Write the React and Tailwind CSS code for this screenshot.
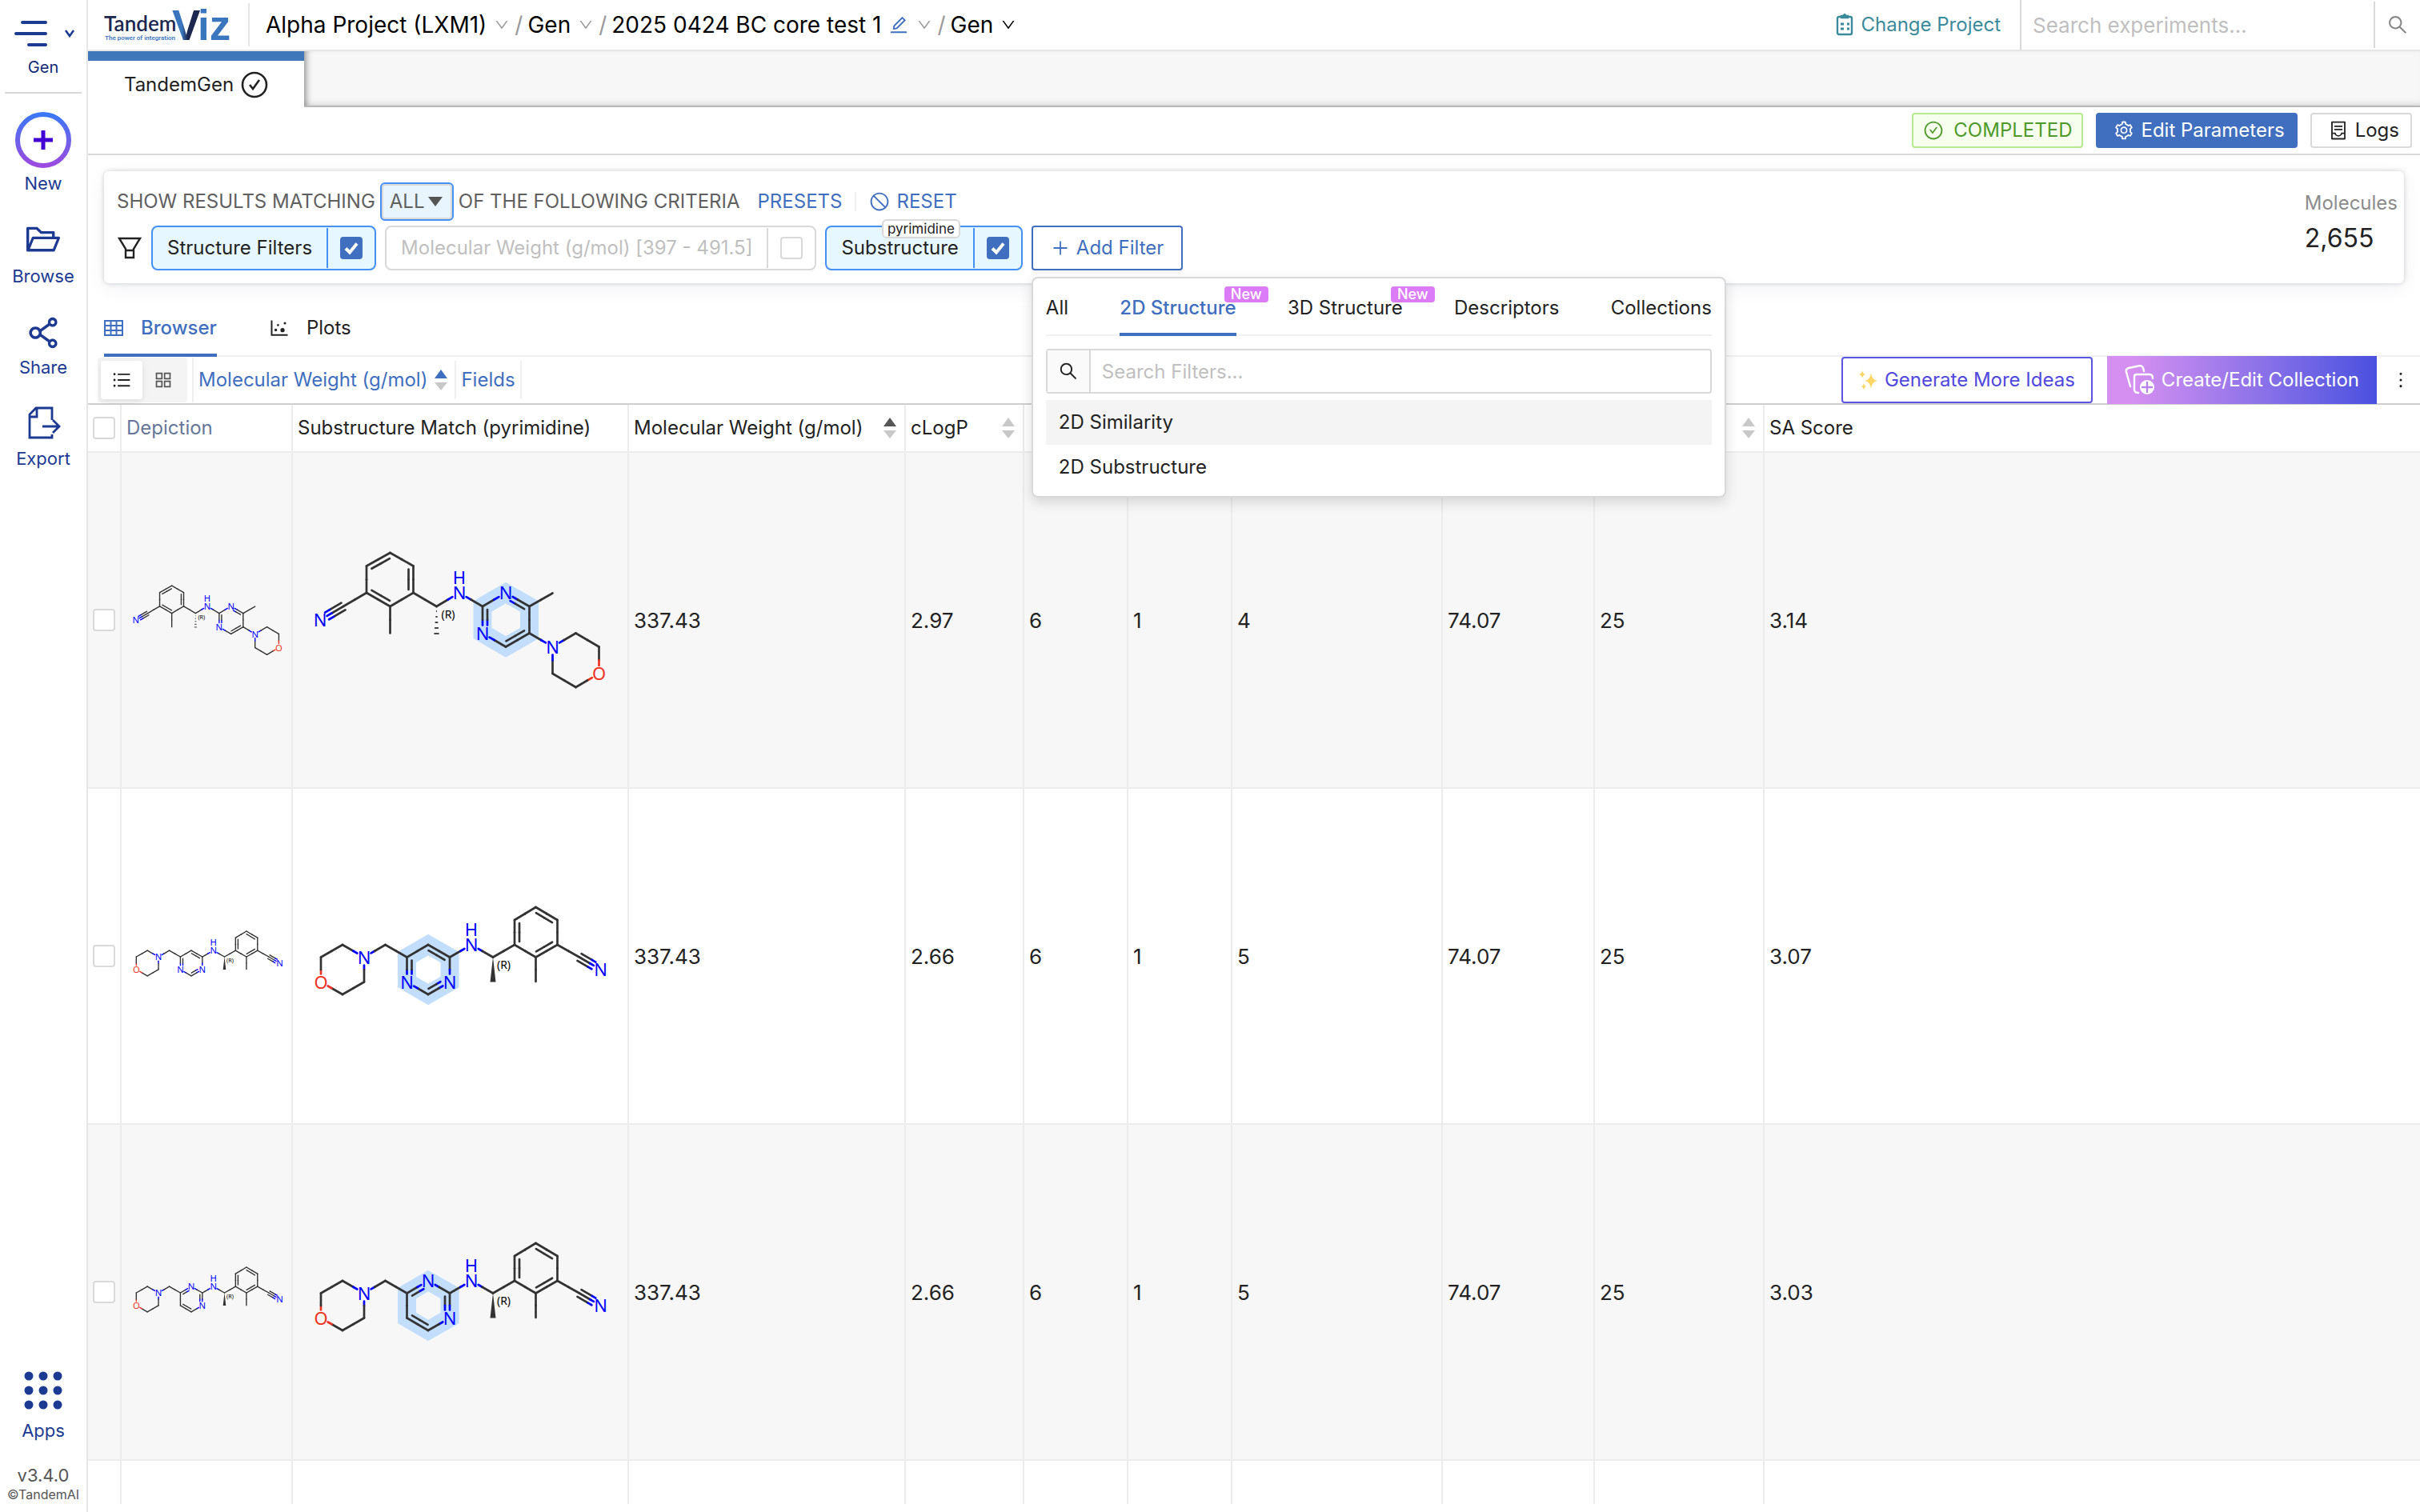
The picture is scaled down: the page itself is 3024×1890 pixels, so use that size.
import React from 'react';
import {
  AiOutlineAppstore,
  AiOutlineCheckCircle,
  AiOutlineContainer,
  AiOutlineDotChart,
  AiOutlineDown,
  AiOutlineEdit,
  AiOutlineFolderOpen,
  AiOutlineMore,
  AiOutlinePlus,
  AiOutlineSearch,
  AiOutlineSetting,
  AiOutlineShareAlt,
  AiOutlineStop,
  AiOutlineUnorderedList,
} from 'react-icons/ai';

const COLORS = { C: '#333333', N: '#0000ff', O: '#ee3322' };

// Atoms are [element, x, y], bonds are [from, to, order, side]
const morpholinyl = {
  atoms: [
    ['C', -87.5, -84], ['C', -58.5, -67.5], ['C', -58.5, -34], ['C', -87.5, -17], ['C', -117, -34], ['C', -117, -67.5],
    ['C', -87.5, 16.5], ['C', -146, -17], ['N', -175, 0],
    ['C', -29.5, -17], ['N', -1, -34], ['C', 28, -17],
    ['N', 57, -34], ['C', 86.5, -17], ['C', 86.5, 16.5], ['C', 57, 33.5], ['N', 28, 16.5],
    ['C', 115.5, -33.5], ['N', 115.5, 33.5],
    ['C', 144.5, 16.5], ['C', 173.5, 33.5], ['O', 173.5, 67], ['C', 144.5, 84], ['C', 115.5, 67],
  ],
  bonds: [
    [0, 1, 1], [1, 2, 2, 1], [2, 3, 1], [3, 4, 2, 1], [4, 5, 1], [5, 0, 2, 1],
    [3, 6, 1], [4, 7, 1], [7, 8, 3], [2, 9, 1], [9, 10, 1], [10, 11, 1],
    [11, 12, 1], [12, 13, 2, 1], [13, 14, 1], [14, 15, 2, 1], [15, 16, 1], [16, 11, 2, 1],
    [13, 17, 1], [14, 18, 1], [18, 19, 1], [19, 20, 1], [20, 21, 1], [21, 22, 1], [22, 23, 1], [23, 18, 1],
  ],
  ring: [11, 12, 13, 14, 15, 16],
  nh: [-1, -53],
  chiral: [-15, -7],
  hashed: [-29.5, -17],
};

const tail = [
  ['O', -174, 32.5], ['C', -174, 1.5], ['C', -147, -14], ['N', -120, 1.5], ['C', -120, 32.5], ['C', -147, 48], ['C', -93.5, -14],
];
const benzonitrile = [
  ['N', 14, -14], ['C', 41, 1.5],
  ['C', 68, -14], ['C', 68, -45], ['C', 94.5, -61], ['C', 121.5, -45], ['C', 121.5, -14], ['C', 94.5, 1.5],
  ['C', 94.5, 32], ['C', 149, 1.5], ['N', 175.5, 17],
];
const sharedBonds = [
  [0, 1, 1], [1, 2, 1], [2, 3, 1], [3, 4, 1], [4, 5, 1], [5, 0, 1], [3, 6, 1], [6, 7, 1],
  [9, 13, 1], [13, 14, 1], [14, 15, 1], [15, 16, 2, 1], [16, 17, 1], [17, 18, 2, 1], [18, 19, 1], [19, 20, 2, 1], [20, 15, 1],
  [20, 21, 1], [19, 22, 1], [22, 23, 3],
];

const pyrimidin4yl = {
  atoms: [
    ...tail,
    ['C', -66.5, 1.5], ['C', -40, -14], ['C', -13, 1.5], ['N', -13, 32.5], ['C', -40, 48], ['N', -66.5, 32.5],
    ...benzonitrile,
  ],
  bonds: [...sharedBonds, [7, 8, 1], [8, 9, 2, 1], [9, 10, 1], [10, 11, 2, 1], [11, 12, 1], [12, 7, 2, 1]],
  ring: [7, 8, 9, 10, 11, 12],
  nh: [14, -33],
  chiral: [54.5, 11],
  wedge: [41, 1.5],
};

const pyrimidin2yl = {
  atoms: [
    ...tail,
    ['C', -66.5, 1.5], ['N', -40, -14], ['C', -13, 1.5], ['N', -13, 32.5], ['C', -40, 48], ['C', -66.5, 32.5],
    ...benzonitrile,
  ],
  bonds: [...sharedBonds, [7, 8, 2, 1], [8, 9, 1], [9, 10, 2, 1], [10, 11, 1], [11, 12, 2, 1], [12, 7, 1]],
  ring: [7, 8, 9, 10, 11, 12],
  nh: [14, -33],
  chiral: [54.5, 11],
  wedge: [41, 1.5],
};

const rows = [
  { id: 1, molecule: morpholinyl, values: ['337.43', '2.97', '6', '1', '4', '74.07', '25', '3.14'] },
  { id: 2, molecule: pyrimidin4yl, values: ['337.43', '2.66', '6', '1', '5', '74.07', '25', '3.07'] },
  { id: 3, molecule: pyrimidin2yl, values: ['337.43', '2.66', '6', '1', '5', '74.07', '25', '3.03'] },
];

const Bond = ({ a, b, order, side }) => {
  const dx = b[1] - a[1];
  const dy = b[2] - a[2];
  const len = Math.hypot(dx, dy);
  const ux = dx / len;
  const uy = dy / len;
  const nx = -uy * (side || 1);
  const ny = ux * (side || 1);

  const segment = (offset, trim, key) => {
    const padA = a[0] === 'C' ? trim : 10;
    const padB = b[0] === 'C' ? trim : 10;
    const x1 = a[1] + ux * padA + nx * offset;
    const y1 = a[2] + uy * padA + ny * offset;
    const x2 = b[1] - ux * padB + nx * offset;
    const y2 = b[2] - uy * padB + ny * offset;
    const mx = (a[1] + b[1]) / 2 + nx * offset;
    const my = (a[2] + b[2]) / 2 + ny * offset;
    return (
      <g key={key}>
        <line x1={x1} y1={y1} x2={mx} y2={my} stroke={COLORS[a[0]]} />
        <line x1={mx} y1={my} x2={x2} y2={y2} stroke={COLORS[b[0]]} />
      </g>
    );
  };

  if (order === 3) return <>{[segment(0, 0, 'm'), segment(5, 0, 'l'), segment(-5, 0, 'r')]}</>;
  if (order === 2) return <>{[segment(0, 0, 'm'), segment(6, 4, 'i')]}</>;
  return segment(0, 0, 'm');
};

const Molecule = ({ data, highlight }) => {
  const { atoms, bonds, ring, nh, chiral, hashed, wedge } = data;
  return (
    <svg viewBox="-200 -100 400 200" className="block w-full">
      {highlight && (
        <polygon
          points={ring.map((i) => `${atoms[i][1]},${atoms[i][2]}`).join(' ')}
          fill="none"
          stroke="#c2defc"
          strokeWidth="23"
          strokeLinejoin="miter"
        />
      )}
      <g strokeWidth="2.7" strokeLinecap="round">
        {bonds.map(([from, to, order, side]) => (
          <Bond key={`${from}-${to}`} a={atoms[from]} b={atoms[to]} order={order} side={side} />
        ))}
      </g>
      {hashed && (
        <g stroke="#333333" strokeWidth="1.8">
          {[6, 13, 20, 27, 34].map((d) => (
            <line key={d} x1={hashed[0] - d / 11} x2={hashed[0] + d / 11} y1={hashed[1] + d} y2={hashed[1] + d} />
          ))}
        </g>
      )}
      {wedge && <polygon points={`${wedge[0]},${wedge[1]} ${wedge[0] - 3.5},${wedge[1] + 31} ${wedge[0] + 3.5},${wedge[1] + 31}`} fill="#333333" />}
      <g fontFamily="'Noto Sans', sans-serif" fontSize="22" textAnchor="middle">
        {atoms.map(([el, x, y], i) =>
          el === 'C' ? null : (
            <text key={i} x={x} y={y + 8} fill={COLORS[el]}>{el}</text>
          )
        )}
        <text x={nh[0]} y={nh[1] + 8} fill={COLORS.N}>H</text>
        <text x={chiral[0]} y={chiral[1] + 5} fontSize="14" fill="#000000">(R)</text>
      </g>
    </svg>
  );
};

const Sorter = ({ up = '#c8c8c8', down = '#c8c8c8' }) => (
  <svg width="18" height="28" viewBox="0 0 18 28" className="shrink-0">
    <path d="M9 1 L17 12 H1 Z" fill={up} />
    <path d="M1 17 H17 L9 27 Z" fill={down} />
  </svg>
);

const Checkbox = ({ checked, label }) => (
  <span className="grid h-7 w-7 shrink-0">
    <input
      type="checkbox"
      aria-label={label}
      defaultChecked={checked}
      className="peer h-7 w-7 appearance-none rounded border-2 border-[#d9d9d9] bg-white [grid-area:1/1] checked:border-[#3f6fbe] checked:bg-[#3f6fbe]"
    />
    <svg viewBox="0 0 28 28" className="pointer-events-none hidden h-7 w-7 [grid-area:1/1] peer-checked:block">
      <path d="M7 14.5 L12 19.5 L21 8.5" fill="none" stroke="#ffffff" strokeWidth="4" />
    </svg>
  </span>
);

const FilterChip = ({ label, checked, badge }) => (
  <div className={`relative flex h-14 items-center rounded-lg border-2 ${checked ? 'border-[#4590f3] bg-[#e6f7ff] text-[#222222]' : 'border-[#d9d9d9] bg-white text-[#bfbfbf]'}`}>
    <button className="px-[18px]">{label}</button>
    <div className={`flex h-[50px] items-center border-l-2 px-[15px] ${checked ? 'border-[#4590f3]' : 'border-[#d9d9d9]'}`}>
      <Checkbox checked={checked} label={label} />
    </div>
    {badge && (
      <span className="absolute -top-[10px] right-[76px] rounded-md border-2 border-[#d9d9d9] bg-white px-[5px] text-[17px] leading-5">{badge}</span>
    )}
  </div>
);

const SidebarItem = ({ icon, label }) => (
  <button className="flex flex-col items-center text-[22px] leading-7 text-[#1c3a92]">
    {icon}
    {label}
  </button>
);

const Sidebar = () => (
  <nav className="flex w-[110px] shrink-0 flex-col items-center border-r-2 border-[#e6e6e6] bg-white">
    <button className="mt-[22px] flex flex-col items-center text-[20px] text-[#0f2878]">
      <span className="flex items-center gap-5 pl-1">
        <svg width="42" height="40" viewBox="0 0 42 40" stroke="#1c3a92" strokeWidth="4" strokeLinecap="round">
          <path d="M10 6 H39 M2 20 H39 M18 34 H39" />
        </svg>
        <svg width="14" height="12" viewBox="0 0 14 12" fill="none" stroke="#1c3a92" strokeWidth="2.5">
          <path d="M2 2 L7 9 L12 2" />
        </svg>
      </span>
      <span className="mt-2 leading-7">Gen</span>
    </button>
    <div className="mt-[17px] h-0.5 w-24 bg-[#d9d9d9]" />
    <div className="mt-[22px] flex flex-col items-center gap-8">
      <SidebarItem
        label="New"
        icon={
          <svg width="72" height="72" viewBox="0 0 72 72" className="mb-1">
            <defs>
              <linearGradient id="newRing" x1="0" y1="0" x2="0" y2="1">
                <stop offset="0" stopColor="#3b78f6" />
                <stop offset="1" stopColor="#9b4bdf" />
              </linearGradient>
            </defs>
            <circle cx="36" cy="36" r="32" fill="none" stroke="url(#newRing)" strokeWidth="6" />
            <path d="M24 36 H48 M36 24 V48" stroke="#4300d2" strokeWidth="5" />
          </svg>
        }
      />
      <SidebarItem label="Browse" icon={<AiOutlineFolderOpen size={48} className="mb-2" />} />
      <SidebarItem label="Share" icon={<AiOutlineShareAlt size={50} className="mb-1" />} />
      <SidebarItem
        label="Export"
        icon={
          <svg width="46" height="46" viewBox="0 0 46 46" fill="none" stroke="#1c3a92" strokeWidth="2.8" className="mb-2">
            <path d="M34 20 V5 H14 L6 13 V42 H34 V38 M15 5 V16 H6" />
            <path d="M22 28 H43 M35 20 L43 28 L35 36" />
          </svg>
        }
      />
    </div>
    <div className="mt-auto mb-3 flex flex-col items-center">
      <SidebarItem
        label="Apps"
        icon={
          <svg width="48" height="48" viewBox="0 0 48 48" fill="#1c3a92" className="mb-3">
            {[6, 24, 42].map((y) => [6, 24, 42].map((x) => <circle key={`${x}-${y}`} cx={x} cy={y} r="5.5" />))}
          </svg>
        }
      />
      <span className="mt-7 text-[22px] leading-7 text-[#555555]">v3.4.0</span>
      <span className="text-[16px] leading-5 text-[#555555]">©TandemAI</span>
    </div>
  </nav>
);

const Logo = () => (
  <svg width="164" height="62" viewBox="0 0 164 62" className="shrink-0">
    <defs>
      <linearGradient id="ribbon" x1="0" y1="0" x2="1" y2="0">
        <stop offset="0" stopColor="#3a76bd" />
        <stop offset="0.35" stopColor="#3a76bd" />
        <stop offset="0.55" stopColor="#1c2850" />
        <stop offset="1" stopColor="#1c2850" />
      </linearGradient>
    </defs>
    <text x="0" y="39" fontFamily="Lato, sans-serif" fontSize="26" fontWeight="600" fill="#1c2850">Tandem</text>
    <text x="1" y="50" fontFamily="Roboto, sans-serif" fontSize="8" fontWeight="600" fill="#3a76bd">The power of integration</text>
    <text x="85" y="50" fontFamily="'Liberation Sans', sans-serif" fontSize="53" fontWeight="700" fill="url(#ribbon)">V</text>
    <text x="117" y="50" fontFamily="'Liberation Sans', sans-serif" fontSize="53" fontWeight="700" fill="#3a76bd">iz</text>
  </svg>
);

const Crumb = ({ label, dark, edit }) => (
  <button className="flex items-center gap-[9px] text-black">
    {label}
    {edit && <AiOutlineEdit size={26} className="text-[#3f6fbe]" />}
    <AiOutlineDown size={20} className={dark ? 'text-black' : 'text-[#999999]'} />
  </button>
);

const Slash = () => <span className="text-[#999999]">/</span>;

const Header = () => (
  <header className="flex h-16 items-center border-b-2 border-[#e6e6e6] bg-white pl-5">
    <Logo />
    <div className="ml-4 h-[54px] w-0.5 bg-[#e6e6e6]" />
    <div className="ml-5 flex items-center gap-[6px] text-[28px]">
      <Crumb label="Alpha Project (LXM1)" />
      <Slash />
      <Crumb label="Gen" />
      <Slash />
      <Crumb label="2025 0424 BC core test 1" edit />
      <Slash />
      <Crumb label="Gen" dark />
    </div>
    <a href="#projects" className="ml-auto flex items-center gap-[9px] pr-6 text-[#3a8a9c]">
      <svg width="22" height="28" viewBox="0 0 22 28" fill="none" stroke="#3a8a9c" strokeWidth="2.4">
        <rect x="2" y="4" width="18" height="22" rx="2" />
        <path d="M7 5 V3 H9 L11 1 L13 3 H15 V5 Z" fill="#3a8a9c" />
        <path d="M6 13 H10 M6 19 H10 M14 13 H17 M14 19 H17" strokeWidth="3" />
      </svg>
      Change Project
    </a>
    <div className="flex h-full w-[500px] items-center border-l-2 border-[#d9d9d9]">
      <input
        type="search"
        aria-label="Search experiments"
        placeholder="Search experiments..."
        className="h-full min-w-0 flex-1 px-[14px] text-[26px] outline-none placeholder:text-[#bfbfbf]"
      />
      <button aria-label="Search" className="flex h-[58px] w-[58px] items-center justify-center border-l-2 border-[#d9d9d9] text-[#888888]">
        <AiOutlineSearch size={28} />
      </button>
    </div>
  </header>
);

const filterTabs = [
  { label: 'All' },
  { label: '2D Structure', isNew: true, active: true },
  { label: '3D Structure', isNew: true },
  { label: 'Descriptors' },
  { label: 'Collections' },
];

const FilterMenu = () => (
  <div className="absolute top-full left-0 z-10 mt-2 w-[868px] rounded-lg border-2 border-[#d9d9d9] bg-white px-4 pb-2 shadow-[0_6px_16px_rgba(0,0,0,0.14)]">
    <div className="flex h-[72px] justify-between border-b-2 border-[#f0f0f0]">
      {filterTabs.map((tab) => (
        <button key={tab.label} className={`relative h-[72px] border-b-4 pt-[6px] ${tab.active ? 'border-[#3f6fbe] font-medium text-[#3f6fbe]' : 'border-transparent'}`}>
          {tab.label}
          {tab.isNew && (
            <span className="absolute top-[10px] -right-10 rounded bg-[#dc7bf8] px-2 text-[18px] leading-5 font-medium text-white">New</span>
          )}
        </button>
      ))}
    </div>
    <label className="mt-4 flex h-14 items-center rounded border-2 border-[#d9d9d9]">
      <span className="flex h-full w-[54px] items-center justify-center border-r-2 border-[#d9d9d9] bg-[#fafafa]">
        <AiOutlineSearch size={26} />
      </span>
      <input aria-label="Search Filters" placeholder="Search Filters..." className="h-full min-w-0 flex-1 px-[14px] outline-none placeholder:text-[#bfbfbf]" />
    </label>
    <ul className="mt-2">
      <li className="flex h-14 items-center bg-[#f4f4f4] px-4">2D Similarity</li>
      <li className="flex h-14 items-center px-4">2D Substructure</li>
    </ul>
  </div>
);

const FilterCard = () => (
  <section className="m-5 flex h-[140px] rounded-md bg-white pl-4 shadow-[0_0_6px_rgba(0,0,0,0.18),0_6px_24px_rgba(20,40,80,0.06)]">
    <div className="flex flex-col pt-[14px]">
      <div className="flex h-12 items-center text-[#606060]">
        <label htmlFor="match-mode">SHOW RESULTS MATCHING</label>
        <span className="relative mx-[6px] flex items-center">
          <select id="match-mode" className="h-12 w-[92px] appearance-none rounded-md border-2 border-[#4590f3] bg-[#e8f5fe] pl-[10px] inset-ring-2 inset-ring-[#d9d9d9] outline-none">
            <option>ALL</option>
          </select>
          <svg width="18" height="12" viewBox="0 0 18 12" className="pointer-events-none absolute right-[14px]">
            <path d="M0 0 H18 L9 12 Z" fill="#555555" />
          </svg>
        </span>
        <span>OF THE FOLLOWING CRITERIA</span>
        <button className="ml-[22px] text-[#3f6fbe]">PRESETS</button>
        <span className="mx-4 h-6 w-0.5 bg-[#f0f0f0]" />
        <button className="flex items-center gap-2 text-[#3f6fbe]">
          <AiOutlineStop size={26} />
          RESET
        </button>
      </div>
      <div className="mt-[6px] flex items-center gap-[11px] text-[#222222]">
        <svg width="32" height="28" viewBox="0 0 32 28" fill="none" stroke="#222222" strokeWidth="2.4">
          <path d="M3 2 H29 L21 15 V26 H11 V15 Z M11 17 H21" />
        </svg>
        <FilterChip label="Structure Filters" checked />
        <FilterChip label="Molecular Weight (g/mol) [397 - 491.5]" />
        <FilterChip label="Substructure" checked badge="pyrimidine" />
        <div className="relative">
          <button className="flex h-14 items-center gap-2 rounded border-2 border-[#3f6fbe] bg-white px-[22px] text-[#3f6fbe] shadow-[0_4px_0_rgba(0,0,0,0.03)]">
            <AiOutlinePlus size={24} />
            Add Filter
          </button>
          <FilterMenu />
        </div>
      </div>
    </div>
    <div className="ml-auto pt-[22px] pr-2">
      <div className="leading-9 text-[#8c8c8c]">Molecules</div>
      <div className="mt-[6px] text-[32px] leading-10 text-[#222222]">2,655</div>
    </div>
  </section>
);

const App = () => {
  return (
    <div className="flex h-screen overflow-hidden bg-white font-['Inter',sans-serif] text-[24px] text-[#222222]">
      <Sidebar />
      <main className="flex min-w-0 flex-1 flex-col">
        <Header />

        <div className="flex h-[70px]">
          <button className="flex w-[270px] items-center justify-center gap-[9px] border-t-[12px] border-[#3f78ba] bg-white pt-0.5">
            TandemGen
            <svg width="34" height="34" viewBox="0 0 34 34" fill="none" stroke="#222222" strokeWidth="2.6">
              <circle cx="17" cy="17" r="15" />
              <path d="M11 17 L15 22 L23 11" />
            </svg>
          </button>
          <div className="flex-1 border-b-2 border-[#b8b8b8] bg-[#f7f7f7] shadow-[inset_8px_0_8px_-6px_rgba(0,0,0,0.45),inset_0_-8px_8px_-6px_rgba(0,0,0,0.12)]" />
        </div>

        <div className="flex h-[60px] items-center justify-end gap-4 border-b-2 border-[#d9d9d9] pr-[10px]">
          <span className="flex h-11 items-center gap-3 rounded border-2 border-[#b7eb8f] bg-[#f6ffed] px-3 text-[#4f9a2b]">
            <AiOutlineCheckCircle size={26} />
            COMPLETED
          </span>
          <button className="flex h-11 items-center gap-2 rounded bg-[#3f6fbe] pr-4 pl-[22px] text-white">
            <AiOutlineSetting size={26} />
            Edit Parameters
          </button>
          <button className="flex h-11 items-center gap-2 rounded border-2 border-[#d9d9d9] bg-white pr-[14px] pl-5">
            <AiOutlineContainer size={26} />
            Logs
          </button>
        </div>

        <FilterCard />

        <div className="ml-5 flex h-[72px] gap-[64px] border-b-2 border-[#f0f0f0]">
          <button className="flex h-[72px] items-center gap-[22px] border-b-4 border-[#3f6fbe] pt-1 font-medium text-[#3f6fbe]">
            <svg width="24" height="20" viewBox="0 0 24 20" fill="none" stroke="#3f6fbe" strokeWidth="2">
              <path d="M1 1 H23 V19 H1 Z M1 7 H23 M1 13 H23 M8.500 1 V19 M15.500 1 V19" />
            </svg>
            Browser
          </button>
          <button className="flex h-[72px] items-center gap-5 border-b-4 border-transparent pt-1">
            <AiOutlineDotChart size={28} />
            Plots
          </button>
        </div>

        <div className="flex h-[60px] items-center border-b-2 border-[#cfcfcf] pl-3">
          <div className="flex h-14 items-center rounded bg-[#f4f4f4] px-1">
            <button aria-label="List view" className="flex h-12 w-[52px] items-center justify-center rounded bg-white shadow-[0_2px_8px_rgba(0,0,0,0.1)]">
              <AiOutlineUnorderedList size={26} />
            </button>
            <button aria-label="Grid view" className="flex h-12 w-[52px] items-center justify-center text-[#555555]">
              <AiOutlineAppstore size={26} />
            </button>
          </div>
          <div className="ml-[6px] flex h-14 items-center gap-2 border-l-2 border-[#f0f0f0] pl-[6px] text-[#3f6fbe]">
            <button>Molecular Weight (g/mol)</button>
            <button aria-label="Sort direction"><Sorter up="#3f6fbe" /></button>
          </div>
          <button className="ml-2 h-12 border-x-2 border-[#f0f0f0] px-[6px] text-[#3f6fbe]">Fields</button>
          <button className="ml-auto flex h-[58px] items-center gap-2 rounded border-2 border-[#5b55e0] px-5 text-[#5148dc]">
            <svg width="24" height="26" viewBox="0 0 24 26" fill="#fbd667">
              <path d="M15 4 Q16 13 23 14 Q16 15 15 24 Q14 15 7 14 Q14 13 15 4 Z" />
              <path d="M4 1 Q4.500 5 8 6 Q4.500 7 4 11 Q3.500 7 0 6 Q3.500 5 4 1 Z" />
              <path d="M6 17 Q6.500 20 9 21 Q6.500 22 6 25 Q5.500 22 3 21 Q5.500 20 6 17 Z" />
            </svg>
            Generate More Ideas
          </button>
          <button className="ml-[18px] flex h-[60px] items-center gap-2 bg-linear-to-r from-[#d48ff0] from-10% to-[#4a50df] px-[22px] text-white">
            <svg width="38" height="38" viewBox="0 0 38 38" fill="none" stroke="#ffffff" strokeWidth="2.4" strokeLinecap="round">
              <path d="M7 27 L2 9 Q1 5 5 4 L19 1 Q23 1 24 8" />
              <path d="M17 35 Q12 35 12 31 V15 Q12 12 15 12 H31 Q35 12 35 17" />
              <circle cx="28" cy="28" r="9" fill="#ffffff" stroke="none" />
              <path d="M22 28 H34 M28 22 V34" stroke="#b983ec" />
            </svg>
            Create/Edit Collection
          </button>
          <button aria-label="More" className="flex w-[54px] justify-center pl-[6px]"><AiOutlineMore size={28} /></button>
        </div>

        <div className="mb-[10px] min-h-0 flex-1 overflow-hidden">
          <table className="w-full table-fixed border-separate border-spacing-0 text-left">
            <colgroup>
              <col className="w-[42px]" />
              <col className="w-[214px]" />
              <col className="w-[420px]" />
              <col className="w-[346px]" />
              <col className="w-[148px]" />
              <col className="w-[130px]" />
              <col className="w-[130px]" />
              <col className="w-[263px]" />
              <col className="w-[190px]" />
              <col className="w-[212px]" />
              <col />
            </colgroup>
            <thead>
              <tr className="h-[60px] [&>th]:border-r-2 [&>th]:border-b-2 [&>th]:border-[#ececec] [&>th]:p-0 [&>th]:font-normal [&>th:last-child]:border-r-0">
                <th><div className="flex justify-center"><Checkbox label="Select all" /></div></th>
                <th><div className="pl-[6px] text-[#667799]">Depiction</div></th>
                <th><div className="pl-[6px]">Substructure Match (pyrimidine)</div></th>
                <th><div className="flex items-center justify-between pr-[9px] pl-[6px]">Molecular Weight (g/mol)<Sorter up="#555555" /></div></th>
                <th><div className="flex items-center justify-between pr-[9px] pl-[6px]">cLogP<Sorter /></div></th>
                <th />
                <th />
                <th />
                <th />
                <th><div className="flex justify-end pr-[9px]"><Sorter /></div></th>
                <th><div className="pl-[6px]">SA Score</div></th>
              </tr>
            </thead>
            <tbody className="text-[26px]">
              {rows.map((row) => (
                <tr key={row.id} className="h-[420px] odd:bg-[#f7f7f7] [&>td]:border-r-2 [&>td]:border-b-2 [&>td]:border-[#ececec] [&>td]:p-0 [&>td:last-child]:border-r-0">
                  <td><div className="flex justify-center"><Checkbox label={`Select molecule ${row.id}`} /></div></td>
                  <td><div className="pr-0.5 pl-[5px]"><Molecule data={row.molecule} /></div></td>
                  <td><div className="px-[9px]"><Molecule data={row.molecule} highlight /></div></td>
                  {row.values.map((value, i) => (
                    <td key={i}><div className="pl-[6px]">{value}</div></td>
                  ))}
                </tr>
              ))}
              <tr className="h-[420px] [&>td]:border-r-2 [&>td]:border-[#ececec] [&>td:last-child]:border-r-0">
                {Array.from({ length: 11 }, (_, i) => <td key={i} />)}
              </tr>
            </tbody>
          </table>
        </div>
      </main>
    </div>
  );
};

export default App;
